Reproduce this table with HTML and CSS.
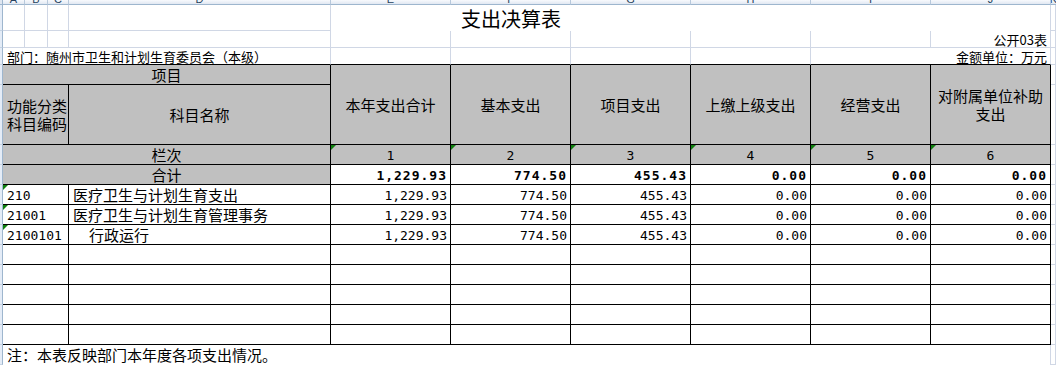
FILE: index.html
```html
<!DOCTYPE html>
<html lang="zh-CN">
<head>
<meta charset="utf-8">
<title>支出决算表</title>
<link rel="stylesheet" href="styles.css">
</head>
<body>
<table class="sheet">
  <colgroup>
    <col class="c-rh"><col class="c-a"><col class="c-b"><col class="c-c"><col class="c-d">
    <col class="c-n"><col class="c-n"><col class="c-n"><col class="c-n"><col class="c-n"><col class="c-n">
    <col class="c-k">
  </colgroup>
  <tr class="r-colhead">
    <td class="rh corner"></td>
    <td class="ch"><div class="chi"><span>A</span></div></td>
    <td class="ch"><div class="chi"><span>B</span></div></td>
    <td class="ch"><div class="chi"><span>C</span></div></td>
    <td class="ch"><div class="chi"><span>D</span></div></td>
    <td class="ch"><div class="chi"><span>E</span></div></td>
    <td class="ch"><div class="chi"><span>F</span></div></td>
    <td class="ch"><div class="chi"><span>G</span></div></td>
    <td class="ch"><div class="chi"><span>H</span></div></td>
    <td class="ch"><div class="chi"><span>I</span></div></td>
    <td class="ch"><div class="chi"><span>J</span></div></td>
    <td class="ch ch-k"><div class="chi"><span>K</span></div></td>
  </tr>
  <tr class="r-title">
    <td class="rh"></td>
    <td class="g"></td><td class="g"></td><td class="g"></td><td class="g"></td>
    <td class="title" colspan="3">支出决算表</td>
    <td class="g-r" colspan="3"></td>
    <td class="g"></td>
  </tr>
  <tr class="r-small">
    <td class="rh"></td>
    <td class="g"></td><td class="g"></td><td class="g"></td><td class="g"></td>
    <td class="g"></td><td class="g"></td><td class="g"></td><td class="g"></td><td class="g"></td>
    <td class="g small right">公开03表</td>
    <td class="g"></td>
  </tr>
  <tr class="r-small">
    <td class="rh"></td>
    <td class="g tb small left" colspan="4">部门：随州市卫生和计划生育委员会（本级）</td>
    <td class="g tb"></td><td class="g tb"></td><td class="g tb"></td><td class="g tb"></td>
    <td class="g tb small right" colspan="2">金额单位：万元</td>
    <td class="g"></td>
  </tr>
  <tr class="r-row">
    <td class="rh"></td>
    <td class="b gray center" colspan="4">项目</td>
    <td class="b gray center hd" rowspan="2">本年支出合计</td>
    <td class="b gray center hd" rowspan="2">基本支出</td>
    <td class="b gray center hd" rowspan="2">项目支出</td>
    <td class="b gray center hd" rowspan="2">上缴上级支出</td>
    <td class="b gray center hd" rowspan="2">经营支出</td>
    <td class="b gray center hd" rowspan="2">对附属单位补助<br>支出</td>
    <td class="g"></td>
  </tr>
  <tr class="r-head">
    <td class="rh"></td>
    <td class="b gray left hd" colspan="3">功能分类<br>科目编码</td>
    <td class="b gray center">科目名称</td>
    <td class="g"></td>
  </tr>
  <tr class="r-row">
    <td class="rh"></td>
    <td class="b gray center" colspan="4">栏次</td>
    <td class="b gray center num tri">1</td>
    <td class="b gray center num tri">2</td>
    <td class="b gray center num tri">3</td>
    <td class="b gray center num tri">4</td>
    <td class="b gray center num tri">5</td>
    <td class="b gray center num tri">6</td>
    <td class="g"></td>
  </tr>
  <tr class="r-row">
    <td class="rh"></td>
    <td class="b gray center" colspan="4">合计</td>
    <td class="b right num bold">1,229.93</td>
    <td class="b right num bold">774.50</td>
    <td class="b right num bold">455.43</td>
    <td class="b right num bold">0.00</td>
    <td class="b right num bold">0.00</td>
    <td class="b right num bold">0.00</td>
    <td class="g"></td>
  </tr>
  <tr class="r-row">
    <td class="rh"></td>
    <td class="b left num tri" colspan="3">210</td>
    <td class="b left">医疗卫生与计划生育支出</td>
    <td class="b right num">1,229.93</td>
    <td class="b right num">774.50</td>
    <td class="b right num">455.43</td>
    <td class="b right num">0.00</td>
    <td class="b right num">0.00</td>
    <td class="b right num">0.00</td>
    <td class="g"></td>
  </tr>
  <tr class="r-row">
    <td class="rh"></td>
    <td class="b left num tri" colspan="3">21001</td>
    <td class="b left">医疗卫生与计划生育管理事务</td>
    <td class="b right num">1,229.93</td>
    <td class="b right num">774.50</td>
    <td class="b right num">455.43</td>
    <td class="b right num">0.00</td>
    <td class="b right num">0.00</td>
    <td class="b right num">0.00</td>
    <td class="g"></td>
  </tr>
  <tr class="r-row">
    <td class="rh"></td>
    <td class="b left num tri" colspan="3">2100101</td>
    <td class="b left indent">行政运行</td>
    <td class="b right num">1,229.93</td>
    <td class="b right num">774.50</td>
    <td class="b right num">455.43</td>
    <td class="b right num">0.00</td>
    <td class="b right num">0.00</td>
    <td class="b right num">0.00</td>
    <td class="g"></td>
  </tr>
  <tr class="r-row">
    <td class="rh"></td>
    <td class="b" colspan="3"></td><td class="b"></td>
    <td class="b"></td><td class="b"></td><td class="b"></td><td class="b"></td><td class="b"></td><td class="b"></td>
    <td class="g"></td>
  </tr>
  <tr class="r-row">
    <td class="rh"></td>
    <td class="b" colspan="3"></td><td class="b"></td>
    <td class="b"></td><td class="b"></td><td class="b"></td><td class="b"></td><td class="b"></td><td class="b"></td>
    <td class="g"></td>
  </tr>
  <tr class="r-row">
    <td class="rh"></td>
    <td class="b" colspan="3"></td><td class="b"></td>
    <td class="b"></td><td class="b"></td><td class="b"></td><td class="b"></td><td class="b"></td><td class="b"></td>
    <td class="g"></td>
  </tr>
  <tr class="r-row">
    <td class="rh"></td>
    <td class="b" colspan="3"></td><td class="b"></td>
    <td class="b"></td><td class="b"></td><td class="b"></td><td class="b"></td><td class="b"></td><td class="b"></td>
    <td class="g"></td>
  </tr>
  <tr class="r-row">
    <td class="rh"></td>
    <td class="b" colspan="3"></td><td class="b"></td>
    <td class="b"></td><td class="b"></td><td class="b"></td><td class="b"></td><td class="b"></td><td class="b"></td>
    <td class="g"></td>
  </tr>
  <tr class="r-row">
    <td class="rh"></td>
    <td class="foot left" colspan="10">注：本表反映部门本年度各项支出情况。</td>
    <td class="g"></td>
  </tr>
</table>
</body>
</html>
```

FILE: styles.css
```css
html, body {
  margin: 0;
  padding: 0;
  background: #ffffff;
}

body {
  width: 1056px;
  height: 365px;
  overflow: hidden;
  font-family: "Noto Sans CJK SC", "Noto Sans", sans-serif;
  color: #000000;
}

.sheet {
  border-collapse: separate;
  border-spacing: 0;
  table-layout: fixed;
  width: 1056px;
}

.c-rh { width: 3px; }
.c-a { width: 22px; }
.c-b { width: 23px; }
.c-c { width: 21px; }
.c-d { width: 262px; }
.c-n { width: 120px; }
.c-k { width: 5px; }

td {
  padding: 0;
  white-space: nowrap;
  overflow: visible;
  font-size: 15px;
  line-height: 18px;
  vertical-align: middle;
}

/* row heights */
.r-colhead { height: 5px; }
.r-title { height: 26px; }
.r-small { height: 17px; }
.r-row { height: 20px; }
.r-head { height: 60px; }

/* row header strip on the left */
.rh {
  background: #e4ecf7;
  border-right: 1px solid #9eb6ce;
  border-bottom: 1px solid #c5d3e3;
}

.rh.corner {
  background: #dfe6f0;
  border-bottom: 1px solid #9eb6ce;
}

/* column header strip on top */
.ch {
  background: linear-gradient(#f8fafd, #e1e8f2);
  border-right: 1px solid #b8c9dc;
  border-bottom: 1px solid #9eb6ce;
  color: #27425e;
  font-family: "Liberation Sans", sans-serif;
}

.ch-k {
  border-right: 0;
}

.chi {
  height: 4px;
  overflow: hidden;
  display: flex;
  justify-content: center;
  align-items: flex-end;
}

.chi span {
  font-size: 11px;
  line-height: 11px;
  margin-bottom: -1px;
}

/* excel gridlines */
.g {
  border-right: 1px solid #d0d7e5;
  border-bottom: 1px solid #d0d7e5;
}

.g-r {
  border-right: 1px solid #d0d7e5;
}

.tb {
  border-bottom: 1px solid #000000;
}

/* black table borders */
.b {
  border-right: 1px solid #000000;
  border-bottom: 1px solid #000000;
}

.gray {
  background: #c0c0c0;
}

.title {
  font-size: 20px;
  line-height: 22px;
  text-align: center;
  vertical-align: bottom;
  padding-bottom: 1px;
}

.small {
  font-size: 13px;
  line-height: 15px;
}

.left {
  text-align: left;
  padding-left: 4px;
}

.right {
  text-align: right;
  padding-right: 3px;
}

.center {
  text-align: center;
}

.indent {
  padding-left: 20px;
}

.num {
  font-family: "DejaVu Sans Mono", "Liberation Mono", monospace;
  font-size: 13px;
  line-height: 16px;
  padding-top: 2px;
}

.bold {
  font-weight: bold;
  letter-spacing: 1px;
}

.tri {
  position: relative;
}

.tri::before {
  content: "";
  position: absolute;
  left: 0;
  top: 0;
  border-top: 5px solid #108010;
  border-right: 5px solid transparent;
}

.foot {
  border-right: 1px solid #d0d7e5;
}
```
